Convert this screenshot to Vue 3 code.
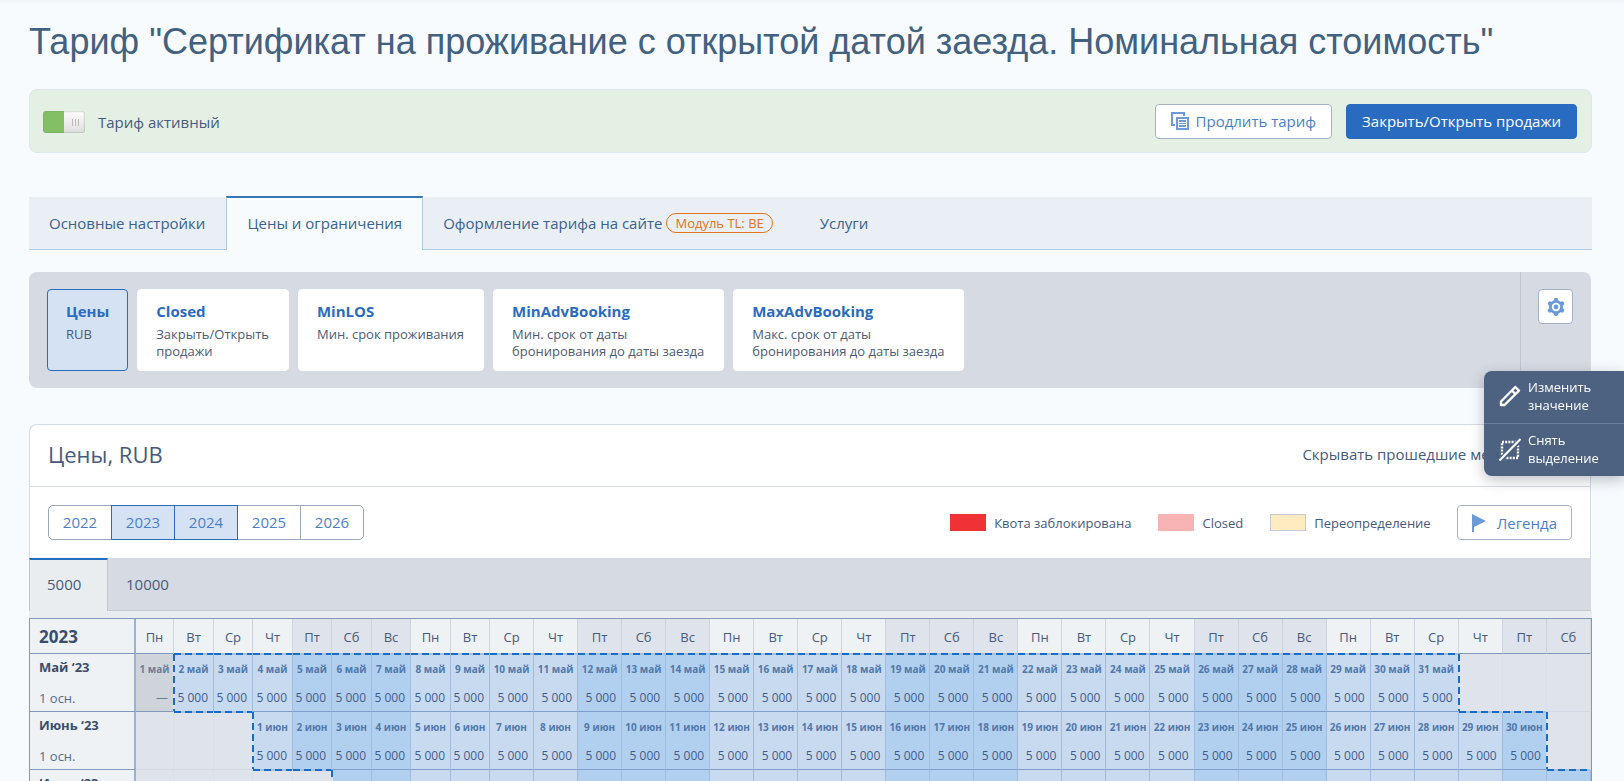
<script setup>
import { ref } from 'vue'

const active = ref(true)
const hidePast = ref(false)

const tabs = [
  { title: 'Основные настройки' },
  { title: 'Цены и ограничения', current: true },
  { title: 'Оформление тарифа на сайте', badge: 'Модуль TL: BE' },
  { title: 'Услуги' },
]

const restrictions = [
  { name: 'Цены', lines: ['RUB'], current: true },
  { name: 'Closed', lines: ['Закрыть/Открыть', 'продажи'] },
  { name: 'MinLOS', lines: ['Мин. срок проживания'] },
  { name: 'MinAdvBooking', lines: ['Мин. срок от даты', 'бронирования до даты заезда'] },
  { name: 'MaxAdvBooking', lines: ['Макс. срок от даты', 'бронирования до даты заезда'] },
]

const years = [
  { value: 2022 },
  { value: 2023, on: true },
  { value: 2024, on: true },
  { value: 2025 },
  { value: 2026 },
]

const legend = [
  { kind: 'blocked', label: 'Квота заблокирована' },
  { kind: 'closed', label: 'Closed' },
  { kind: 'override', label: 'Переопределение' },
]

const COLUMNS = 34
const weekdays = ['Пн', 'Вт', 'Ср', 'Чт', 'Пт', 'Сб', 'Вс']
const columns = Array.from({ length: COLUMNS }, (_, i) => ({
  name: weekdays[i % 7],
  weekend: i % 7 > 3,
  size: i === 0 ? 'first' : i > 8 ? 'wide' : i % 2 ? 'medium' : 'narrow',
}))

const months = [
  { title: 'Май ‘23', short: 'май', offset: 0, days: 31, from: 2 },
  { title: 'Июнь ‘23', short: 'июн', offset: 3, days: 30, from: 1 },
  { title: 'Июль ‘23', short: 'июл', offset: 5, days: 31, from: 1 },
]

function isSelected(row, col) {
  const m = months[row]
  if (!m || col < 0 || col >= COLUMNS) return false
  const day = col - m.offset + 1
  return day >= m.from && day <= m.days
}

const rows = months.map((m, r) => ({
  title: m.title,
  cells: columns.map((c, i) => {
    const day = i - m.offset + 1
    const exists = day >= 1 && day <= m.days
    const selected = isSelected(r, i)
    return {
      date: exists ? `${day} ${m.short}` : '',
      price: selected ? '5 000' : exists ? '—' : '',
      classes: {
        empty: !exists,
        past: exists && !selected,
        selected,
        weekend: c.weekend,
        'edge-top': selected !== isSelected(r - 1, i),
        'edge-left': i > 0 && selected !== isSelected(r, i - 1),
      },
    }
  }),
}))
</script>

<template>
  <main class="page">
    <h1>Тариф "Сертификат на проживание с открытой датой заезда. Номинальная стоимость"</h1>

    <section class="status">
      <label class="switch-label">
        <input v-model="active" class="switch" type="checkbox" />
        <span>Тариф активный</span>
      </label>
      <div class="status-actions">
        <button class="btn" type="button">
          <svg width="18" height="18" viewBox="0 0 18 18" aria-hidden="true">
            <path d="M1 13V1h12v3" fill="none" stroke="#6e9ad9" stroke-width="2" />
            <path d="M0 12h4v2H0z" fill="#6e9ad9" />
            <path d="M5 5h13v13H5z" fill="#6e9ad9" />
            <path d="M7 7h9v9H7z" fill="#fff" />
            <path d="M8 8h7v2H8zM8 11h7v1H8zM8 13h7v2H8z" fill="#6e9ad9" />
          </svg>
          <span>Продлить тариф</span>
        </button>
        <button class="btn primary" type="button">Закрыть/Открыть продажи</button>
      </div>
    </section>

    <nav class="tabs">
      <a v-for="t in tabs" :key="t.title" href="#" :class="['tab', { current: t.current }]">
        <span>{{ t.title }}</span>
        <span v-if="t.badge" class="badge">{{ t.badge }}</span>
      </a>
    </nav>

    <section class="restrictions">
      <div class="restriction-list">
        <button
          v-for="r in restrictions"
          :key="r.name"
          type="button"
          :class="['restriction', { current: r.current }]"
        >
          <strong>{{ r.name }}</strong>
          <span v-for="l in r.lines" :key="l">{{ l }}</span>
        </button>
      </div>
      <div class="restriction-settings">
        <button class="btn square" type="button" aria-label="Настройки">
          <svg width="18" height="18" viewBox="0 0 18 18" aria-hidden="true">
            <g fill="#6a9bd8">
              <circle cx="9" cy="9" r="7" />
              <rect x="7" y="0" width="4" height="18" rx="1.4" />
              <rect x="7" y="0" width="4" height="18" rx="1.4" transform="rotate(60 9 9)" />
              <rect x="7" y="0" width="4" height="18" rx="1.4" transform="rotate(120 9 9)" />
            </g>
            <circle cx="9" cy="9" r="4.2" fill="#fff" />
            <circle cx="9" cy="9" r="2.4" fill="#6a9bd8" />
          </svg>
        </button>
      </div>
    </section>

    <section class="prices">
      <header class="prices-head">
        <h2>Цены, RUB</h2>
        <label class="switch-label">
          <span>Скрывать прошедшие месяцы</span>
          <input v-model="hidePast" class="switch" type="checkbox" />
        </label>
      </header>

      <div class="toolbar">
        <div class="years">
          <button v-for="y in years" :key="y.value" type="button" :class="{ on: y.on }">
            {{ y.value }}
          </button>
        </div>
        <ul class="legend">
          <li v-for="l in legend" :key="l.kind">
            <i :class="['swatch', l.kind]"></i>
            <span>{{ l.label }}</span>
          </li>
        </ul>
        <button class="btn legend-btn" type="button">
          <svg width="14" height="18" viewBox="0 0 14 18" aria-hidden="true">
            <path d="M0 0l14 7L2 13v5H0z" fill="#6a9bd8" />
          </svg>
          <span>Легенда</span>
        </button>
      </div>

      <nav class="nominals">
        <a href="#" class="nominal current">5000</a>
        <a href="#" class="nominal">10000</a>
      </nav>

      <table class="calendar">
        <colgroup>
          <col class="label" />
          <col v-for="(c, i) in columns" :key="i" :class="c.size" />
        </colgroup>
        <thead>
          <tr>
            <th class="year" scope="col">2023</th>
            <th v-for="(c, i) in columns" :key="i" scope="col" :class="{ weekend: c.weekend }">
              {{ c.name }}
            </th>
          </tr>
        </thead>
        <tbody>
          <tr v-for="r in rows" :key="r.title">
            <th scope="row">
              <div class="month">{{ r.title }}</div>
              <div class="guests">1 осн.</div>
            </th>
            <td v-for="(c, i) in r.cells" :key="i" :class="c.classes">
              <div class="date">{{ c.date }}</div>
              <div class="price">{{ c.price }}</div>
            </td>
          </tr>
        </tbody>
      </table>
    </section>

    <aside class="float">
      <button type="button">
        <svg width="22" height="22" viewBox="0 0 22 22" aria-hidden="true">
          <path
            d="M2 16.500V20h3.500L20 5.700 16.300 2z M12.800 5.500l3.700 3.700"
            fill="none"
            stroke="#fff"
            stroke-width="2.400"
            stroke-linejoin="round"
          />
        </svg>
        <span>Изменить<br />значение</span>
      </button>
      <button type="button">
        <svg width="22" height="23" viewBox="0 0 22 23" aria-hidden="true">
          <rect
            x="3"
            y="4"
            width="16"
            height="16"
            fill="none"
            stroke="#fff"
            stroke-width="2.400"
            stroke-dasharray="2 1.200"
          />
          <path d="M1 22.500L22 1" stroke="#4d6180" stroke-width="5" />
          <path d="M.5 22.500L21.500 1" stroke="#fff" stroke-width="2.200" />
        </svg>
        <span>Снять<br />выделение</span>
      </button>
    </aside>
  </main>
</template>

<style>
html,
body {
  background: #f7fbfe;
}
body {
  margin: 0;
}
</style>

<style scoped>
.page {
  min-height: 100vh;
  box-sizing: border-box;
  padding: 14px 32px 0 29px;
  background: linear-gradient(#eff3f7, #f7fbfe 5px);
  color: #475a7d;
  font: 15px/20px 'Open Sans', 'Noto Sans', sans-serif;
}
h1,
h2 {
  margin: 0;
  font-weight: 400;
}
h1 {
  margin-bottom: 19px;
  color: #42607f;
  font: 36px/56px 'Liberation Sans', Arial, sans-serif;
}
button {
  margin: 0;
  font: inherit;
  cursor: pointer;
}
a {
  color: inherit;
  text-decoration: none;
}

/* Status bar */
.status {
  display: flex;
  align-items: center;
  justify-content: space-between;
  box-sizing: border-box;
  height: 64px;
  padding: 0 14px 0 13px;
  border: 1px solid #dde8ee;
  border-radius: 8px;
  background: #e5f0e4;
}
.status-actions {
  display: flex;
  gap: 14px;
}
.switch-label {
  display: flex;
  align-items: center;
  gap: 13px;
}
.switch {
  appearance: none;
  box-sizing: border-box;
  width: 42px;
  height: 22px;
  margin: 0;
  border-radius: 3px;
  background:
    linear-gradient(90deg, #b9b9b9 1px, transparent 1px 3px, #b9b9b9 3px 4px, transparent 4px 6px, #b9b9b9 6px) 29px 8px / 7px 7px no-repeat,
    linear-gradient(#fdfdfd, #dedede) right / 21px 22px no-repeat,
    #83c065;
  box-shadow: inset 0 0 2px #7c9a70;
}
.status .switch-label {
  padding-top: 2px;
}
.btn {
  display: flex;
  align-items: center;
  justify-content: center;
  gap: 7px;
  box-sizing: border-box;
  height: 35px;
  padding: 0 15px;
  border: 1px solid #a5b1c6;
  border-radius: 4px;
  background: #fff;
  color: #4b7fcb;
  white-space: nowrap;
}
.btn.primary {
  border-color: #286bc0;
  background: #286bc0;
  color: #fff;
}
.btn.square {
  width: 35px;
  padding: 0;
}

/* Section tabs */
.tabs {
  display: flex;
  box-sizing: border-box;
  height: 54px;
  margin-top: 43px;
  background: linear-gradient(#f7fbfe 1px, #eaeff6 1px);
  box-shadow: inset 0 -1px #b0cce5;
  color: #3a628b;
}
.tab {
  display: flex;
  align-items: center;
  gap: 4px;
  padding: 0 21px 0 20px;
}
.tab.current {
  padding: 0 20px 2px;
  border: solid #b0cce5;
  border-width: 2px 1px 0;
  border-top-color: #3577b5;
  background: #f7fbfe;
}
.badge {
  padding: 0 8px;
  margin-right: 6px;
  border: 1px solid #e37419;
  border-radius: 10px;
  color: #e37419;
  font-size: 13px;
  line-height: 18px;
}

/* Restriction picker */
.restrictions {
  display: flex;
  justify-content: space-between;
  margin: 22px 1px 0 0;
  border-radius: 8px;
  background: #d6dae3;
}
.restriction-list {
  display: flex;
  gap: 9px;
  padding: 17px 18px;
}
.restriction {
  display: flex;
  flex-direction: column;
  align-items: flex-start;
  box-sizing: border-box;
  height: 82px;
  padding: 11px 19px 0 18px;
  border: 1px solid #fff;
  border-radius: 4px;
  background: #fff;
  color: #4c5b78;
  font-size: 13px;
  line-height: 17px;
}
.restriction strong {
  margin-bottom: 5px;
  color: #2a6bc1;
  font-size: 15px;
  line-height: 20px;
}
.restriction.current {
  padding-right: 18px;
  border-color: #2a6bc1;
  background: #d5e2f4;
}
.restriction-settings {
  padding: 17px 18px 0 17px;
  border-left: 1px solid #c0c7d3;
}

/* Price card */
.prices {
  margin: 36px 0 0;
}
.prices-head,
.toolbar {
  display: flex;
  align-items: center;
  box-sizing: border-box;
  margin-right: 1px;
  border: solid #d6dae3;
  border-width: 1px 1px 0;
  background: #fff;
}
.prices-head {
  justify-content: space-between;
  height: 62px;
  padding: 0 18px 4px;
  border-radius: 8px 8px 0 0;
}
.prices-head .switch-label {
  gap: 4px;
}
h2 {
  font-size: 22px;
  line-height: 30px;
}
.toolbar {
  height: 72px;
  padding: 0 18px;
}
.years {
  display: flex;
}
.years button {
  box-sizing: border-box;
  width: 64px;
  height: 35px;
  margin-right: -1px;
  padding: 0 0 2px;
  border: 1px solid #9aa7bd;
  background: #fff;
  color: #4b7fcb;
}
.years button:first-child {
  border-radius: 5px 0 0 5px;
}
.years button:last-child {
  border-radius: 0 5px 5px 0;
}
.years .on {
  z-index: 1;
  border-color: #2a6bc1;
  background: #d5e2f4;
}
.legend {
  display: flex;
  gap: 27px;
  margin: 0 26px 0 auto;
  padding: 0;
  list-style: none;
  font-size: 13px;
}
.legend li {
  display: flex;
  align-items: center;
  gap: 8px;
}
.swatch {
  box-sizing: border-box;
  width: 36px;
  height: 17px;
}
.blocked {
  background: #ee3235;
}
.closed {
  background: #f8b3b4;
}
.override {
  border: 1px solid #c3c9d6;
  background: #feebbf;
}
.legend-btn {
  gap: 11px;
  padding: 0 14px;
}

/* Nominal tabs */
.nominals {
  display: flex;
  box-sizing: border-box;
  height: 53px;
  margin-right: 1px;
  background: #d6dae3;
  box-shadow: inset 0 -1px #c0c6d2;
}
.nominal {
  padding: 16px 18px 0;
}
.nominal.current {
  box-sizing: border-box;
  width: 79px;
  padding: 14px 0 0 17px;
  border: solid #c0c6d2;
  border-width: 2px 1px 0;
  border-top-color: #286bc0;
  background: #eaedf0;
}

/* Calendar */
.calendar {
  width: 100%;
  border: solid #8297ba;
  border-width: 1px 1px 0;
  border-collapse: separate;
  border-spacing: 0;
  table-layout: fixed;
  color: #475a7d;
  font-size: 12px;
  line-height: 16px;
}
.nominals + .calendar {
  margin-top: 7px;
  box-shadow: 0 -7px #eaedf0;
}
.label {
  width: 106px;
}
.first {
  width: 38px;
}
.narrow {
  width: 39px;
}
.medium {
  width: 40px;
}
.calendar th,
.calendar td {
  position: relative;
  box-sizing: border-box;
  padding: 0;
  border-right: 1px solid #cdd4e0;
  border-bottom: 1px solid #8297ba;
  background: #eef2f5;
  text-align: center;
  vertical-align: top;
}
.calendar thead th {
  height: 35px;
  padding-top: 2px;
  font-size: 13px;
  font-weight: 400;
  vertical-align: middle;
}
.calendar thead .weekend {
  background: #dfe3ec;
}
.calendar thead .year,
.calendar tbody th {
  padding-left: 9px;
  border-right: 2px solid #9fb0ce;
  color: #3a4d6c;
  text-align: left;
}
.calendar thead .year {
  font-size: 17px;
  font-weight: 700;
}
.calendar tbody th,
.calendar td {
  height: 58px;
}
.month,
.guests {
  padding-top: 4px;
  font-size: 13px;
  line-height: 18px;
}
.guests {
  padding-top: 13px;
  color: #566a8d;
  font-weight: 400;
}
.date {
  padding-top: 7px;
  color: #5079ac;
  font-size: 10px;
  font-weight: 700;
  line-height: 16px;
  white-space: nowrap;
}
.price {
  padding: 13px 5px 0 0;
  color: #425d8c;
  text-align: right;
  white-space: nowrap;
}
.calendar .empty {
  border-right-color: #dadfe9;
  border-bottom-color: #d3d9e5;
  background: #dfe3ec;
}
.calendar .past {
  background: #cfd3da;
}
.past .date,
.past .price {
  color: #6c7d9a;
}
.calendar .selected {
  border-right-color: #a0bbdc;
  border-bottom-color: #7f9fca;
  background: #c8daf0;
}
.calendar .selected.weekend {
  background: #b1cfee;
}
.edge-top::before,
.edge-left::after {
  position: absolute;
  z-index: 1;
  content: '';
}
.edge-top::before {
  top: -1px;
  right: 0;
  left: 0;
  height: 2px;
  background: repeating-linear-gradient(90deg, #176bc9 0 7px, #a9c0e0 7px 11px);
}
.edge-left::after {
  top: 0;
  bottom: 0;
  left: -1px;
  width: 2px;
  background: repeating-linear-gradient(#176bc9 0 7px, #d3e0f0 7px 11px);
}

/* Floating actions */
.float {
  position: fixed;
  top: 371px;
  right: 0;
  z-index: 2;
  width: 140px;
  border-radius: 8px 0 0 8px;
  background: #4d6180;
  box-shadow: 0 4px 14px rgba(40, 50, 70, 0.3);
}
.float button {
  display: flex;
  align-items: center;
  gap: 7px;
  box-sizing: content-box;
  height: 50px;
  padding: 0 0 2px 15px;
  border: 0;
  background: none;
  color: #fff;
  font-size: 13px;
  line-height: 18px;
  text-align: left;
}
.float button + button {
  width: 125px;
  border-top: 1px solid #6b7f9e;
}
</style>
